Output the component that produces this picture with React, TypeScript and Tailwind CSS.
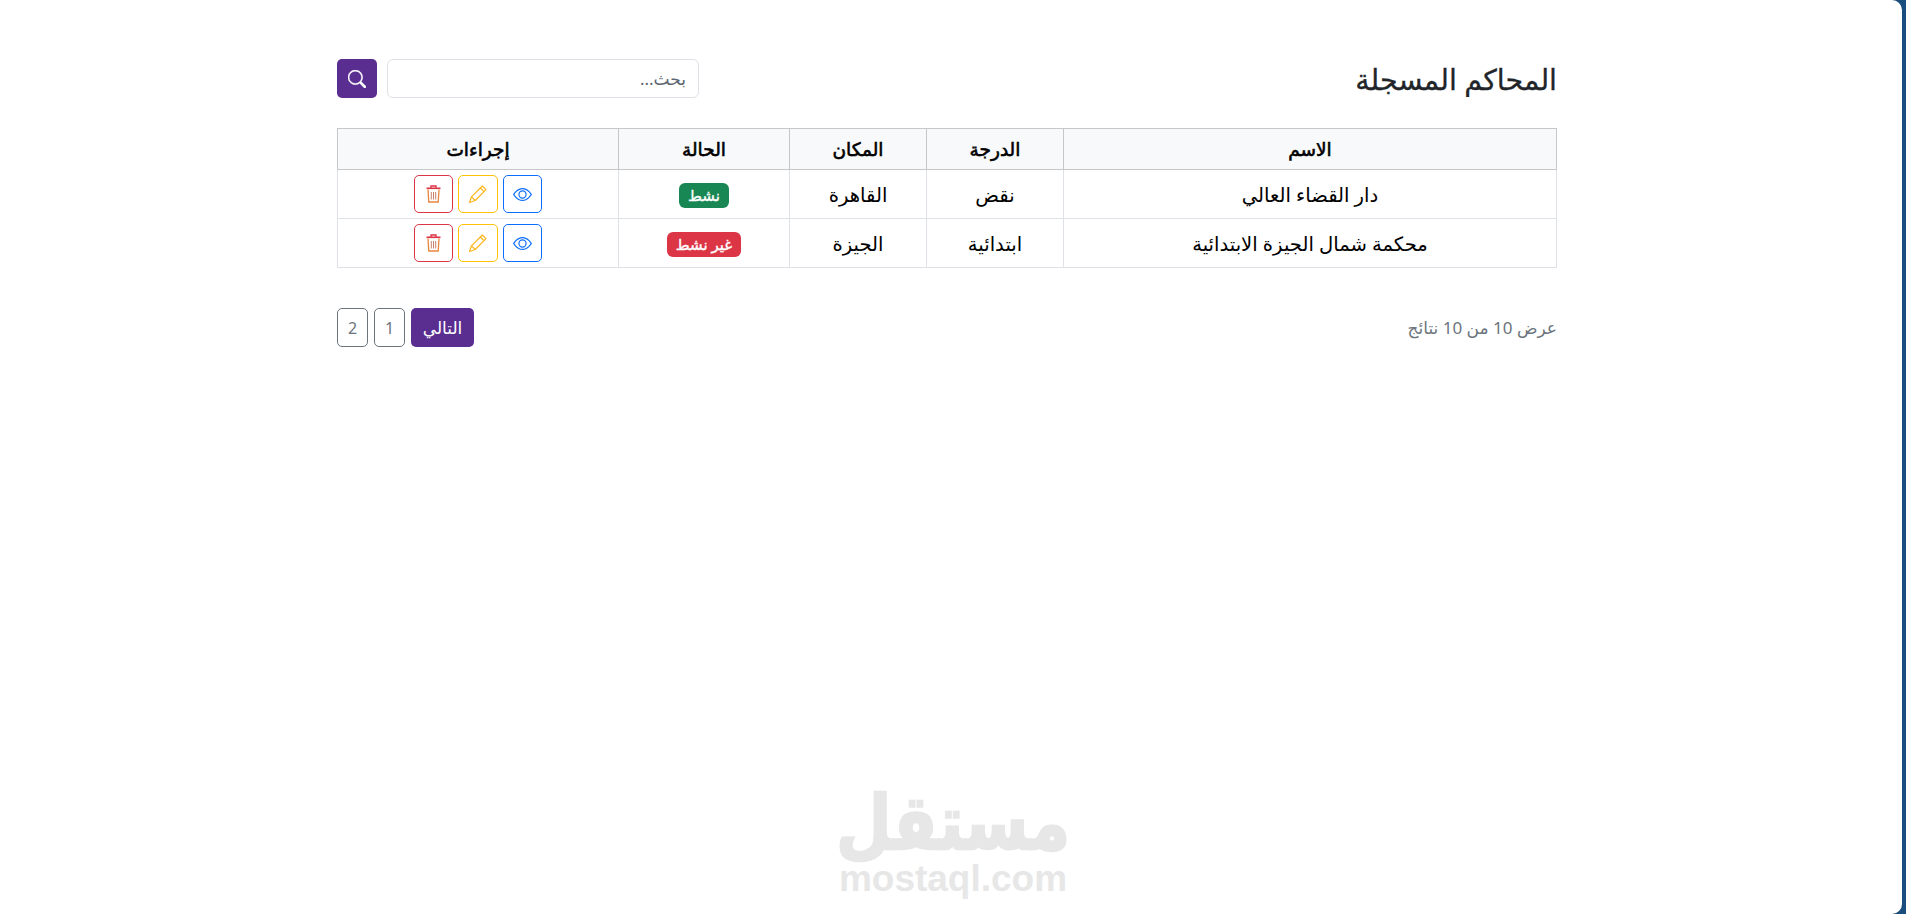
import React from "react";
import { BsEye, BsSearch } from "react-icons/bs";

const font = "font-['Noto_Sans','DejaVu_Sans',sans-serif]";

function PencilIcon() {
  return (
    <svg width="20" height="20" viewBox="0 0 20 20" fill="none" stroke="#fdb51f" strokeWidth="1.2" strokeLinejoin="round">
      <path d="M1.5 18.5L3.5 12.8L14.3 2L18 5.7L7.2 16.5Z" />
      <path d="M3.5 12.8L7.2 16.5M12.3 4L16 7.7" />
    </svg>
  );
}

function TrashIcon() {
  return (
    <svg width="15" height="18" viewBox="0 0 15 18" fill="none" strokeWidth="1.3">
      <path d="M5 3V1H10V3" stroke="#dc3545" />
      <path d="M0.5 3.3H14.5" stroke="#dc3545" strokeWidth="1.6" />
      <path d="M2 4.5L2.8 17H12.2L13 4.5" stroke="#e8863f" />
      <path d="M5.3 7V14.5M7.5 7V14.5M9.7 7V14.5" stroke="#c9806b" strokeWidth="1" />
    </svg>
  );
}

function Actions() {
  return (
    <div className="flex justify-center gap-[5px]">
      <button className="flex h-[38px] w-[39px] items-center justify-center rounded-[5px] border border-[#0d6efd] text-[#0d6efd]">
        <BsEye size={19} />
      </button>
      <button className="flex h-[38px] w-[40px] items-center justify-center rounded-[5px] border border-[#ffc107]">
        <PencilIcon />
      </button>
      <button className="flex h-[38px] w-[39px] items-center justify-center rounded-[5px] border border-[#dc3545]">
        <TrashIcon />
      </button>
    </div>
  );
}

function Row(props: { name: string; level: string; place: string; status: string; active: boolean }) {
  const td = "border border-[#dee2e6] text-center align-middle text-[19.6px] text-black";
  const text = "relative top-[1px]";
  return (
    <tr className="h-[49px]">
      <td className={td}><span className={text}>{props.name}</span></td>
      <td className={td}><span className={text}>{props.level}</span></td>
      <td className={td}><span className={text}>{props.place}</span></td>
      <td className={td}>
        <span
          className={
            props.active
              ? "inline-block rounded-[6px] bg-[#198754] px-[9px] py-[3px] text-[15px] leading-[19px] text-white [-webkit-text-stroke:0.4px_#ffffff]"
              : "inline-block rounded-[6px] bg-[#dc3545] px-[9px] py-[3px] text-[15px] leading-[19px] text-white [-webkit-text-stroke:0.4px_#ffffff]"
          }
        >
          {props.status}
        </span>
      </td>
      <td className={td}>
        <Actions />
      </td>
    </tr>
  );
}

export default function App() {
  const th = "border border-[#c6c7c8] bg-[#f8f9fa] text-center align-middle text-[18.5px] leading-[24px] font-normal text-black [-webkit-text-stroke:0.6px_#000000]";
  return (
    <div className="relative h-[914px] w-full overflow-hidden bg-[#1a4d7c]">
      <div dir="rtl" className={`h-full w-[1902px] rounded-r-[10px] bg-white pt-[59px] pr-[345px] pl-[337px] ${font}`}>
        <div className="flex h-[39px] items-center justify-between">
          <h1 className="text-[28.5px] leading-[40px] font-medium text-[#212529] [-webkit-text-stroke:0.3px_#212529]">المحاكم المسجلة</h1>
          <div className="flex gap-[10px]">
            <input
              readOnly
              placeholder="بحث..."
              className="h-[39px] w-[312px] rounded-[6px] border border-[#dee2e6] bg-white px-[12px] text-[17px] text-[#212529] outline-none placeholder:text-[#5c6670]"
            />
            <button className="flex h-[39px] w-[40px] items-center justify-center rounded-[5px] bg-[#5a2d91] text-white">
              <BsSearch size={18} strokeWidth={0.4} />
            </button>
          </div>
        </div>

        <table className="mt-[30px] w-[1219px] table-fixed border-collapse">
          <colgroup>
            <col className="w-[493px]" />
            <col className="w-[137px]" />
            <col className="w-[137px]" />
            <col className="w-[171px]" />
            <col className="w-[281px]" />
          </colgroup>
          <thead>
            <tr className="h-[41px]">
              <th className={th}>الاسم</th>
              <th className={th}>الدرجة</th>
              <th className={th}>المكان</th>
              <th className={th}>الحالة</th>
              <th className={th}>إجراءات</th>
            </tr>
          </thead>
          <tbody>
            <Row name="دار القضاء العالي" level="نقض" place="القاهرة" status="نشط" active />
            <Row name="محكمة شمال الجيزة الابتدائية" level="ابتدائية" place="الجيزة" status="غير نشط" active={false} />
          </tbody>
        </table>

        <div className="mt-[40px] flex h-[39px] w-[1220px] items-center justify-between">
          <span className="text-[17px] text-[#6c757d]">عرض 10 من 10 نتائج</span>
          <div className="flex gap-[6px]">
            <button className="h-[39px] w-[63px] rounded-[5px] bg-[#5a2d91] text-[17px] text-white">التالي</button>
            <button className="h-[39px] w-[31px] rounded-[5px] border border-[#6c757d] text-[16px] text-[#6c757d]">1</button>
            <button className="h-[39px] w-[31px] rounded-[5px] border border-[#6c757d] text-[16px] text-[#6c757d]">2</button>
          </div>
        </div>
      </div>

      <div className="absolute top-[791px] left-[838px] flex w-[230px] flex-col items-center font-['Liberation_Sans','DejaVu_Sans',sans-serif] font-bold text-[#e7e7e7]">
        <span dir="rtl" className="scale-y-[1.18] font-['DejaVu_Sans',sans-serif] text-[64px] leading-[64px] [-webkit-text-stroke:2px_#e7e7e7]">مستقل</span>
        <span className="mt-[7px] text-[37px] leading-[34px]">mostaql.com</span>
      </div>
    </div>
  );
}
